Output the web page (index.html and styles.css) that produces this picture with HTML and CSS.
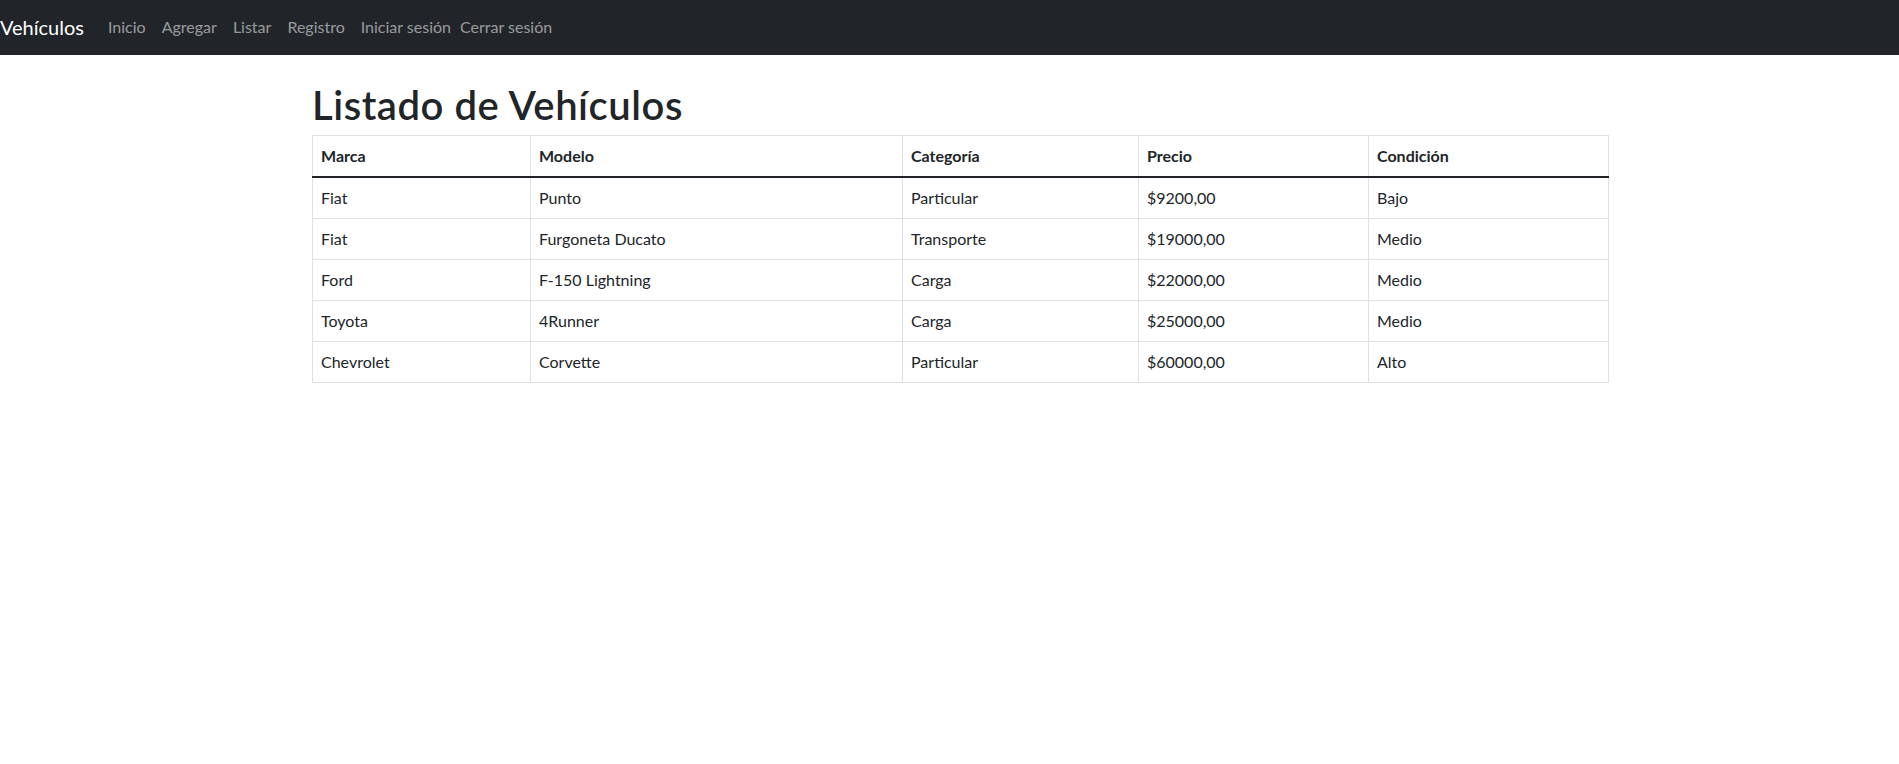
FILE: index.html
```html
<!DOCTYPE html>
<html lang="es">
<head>
<meta charset="utf-8">
<title>Listado de Vehículos</title>
<link rel="stylesheet" href="styles.css">
</head>
<body>
<nav class="navbar">
  <a class="brand" href="#">Vehículos</a>
  <ul class="nav">
    <li><a class="nav-link" href="#">Inicio</a></li>
    <li><a class="nav-link" href="#">Agregar</a></li>
    <li><a class="nav-link" href="#">Listar</a></li>
    <li><a class="nav-link" href="#">Registro</a></li>
    <li><a class="nav-link" href="#">Iniciar sesión</a></li>
    <li><a class="nav-link nav-link-tight" href="#">Cerrar sesión</a></li>
  </ul>
</nav>
<main class="content">
  <h1 class="title">Listado de Vehículos</h1>
  <table class="table">
    <colgroup>
      <col class="c1"><col class="c2"><col class="c3"><col class="c4"><col class="c5">
    </colgroup>
    <thead>
      <tr><th>Marca</th><th>Modelo</th><th>Categoría</th><th>Precio</th><th>Condición</th></tr>
    </thead>
    <tbody>
      <tr><td>Fiat</td><td>Punto</td><td>Particular</td><td>$9200,00</td><td>Bajo</td></tr>
      <tr><td>Fiat</td><td>Furgoneta Ducato</td><td>Transporte</td><td>$19000,00</td><td>Medio</td></tr>
      <tr><td>Ford</td><td>F-150 Lightning</td><td>Carga</td><td>$22000,00</td><td>Medio</td></tr>
      <tr><td>Toyota</td><td>4Runner</td><td>Carga</td><td>$25000,00</td><td>Medio</td></tr>
      <tr><td>Chevrolet</td><td>Corvette</td><td>Particular</td><td>$60000,00</td><td>Alto</td></tr>
    </tbody>
  </table>
</main>
</body>
</html>
```
FILE: styles.css
```css
* { box-sizing: border-box; }
body {
  margin: 0;
  font-family: Lato, "Liberation Sans", sans-serif;
  font-size: 16px;
  line-height: 1.5;
  color: #212529;
  background: #fff;
}
.navbar {
  display: flex;
  align-items: center;
  height: 55px;
  padding-bottom: 2px;
  background: #212529;
}
.brand {
  font-size: 20px;
  line-height: 30px;
  color: #fff;
  text-decoration: none;
  margin-right: 16px;
}
.nav {
  display: flex;
  list-style: none;
  margin: 0;
  padding: 0;
}
.nav-link {
  display: block;
  padding: 8px;
  color: rgba(255, 255, 255, 0.55);
  text-decoration: none;
}
.nav-link-tight { padding-left: 1px; }
.content {
  margin-top: 24px;
  padding-left: 312px;
  width: 1608px;
}
.title {
  margin: 0 0 6px;
  padding-top: 2px;
  font-size: 40px;
  font-weight: 600;
  line-height: 48px;
  letter-spacing: 0.55px;
}
.table {
  width: 1296px;
  table-layout: fixed;
  border-collapse: collapse;
  border: 1px solid #dee2e6;
}
.c1 { width: 218px; }
.c2 { width: 372px; }
.c3 { width: 236px; }
.c4 { width: 230px; }
.c5 { width: 240px; }
.table th, .table td {
  padding: 8px;
  border: 1px solid #dee2e6;
  text-align: left;
  vertical-align: top;
}
.table th { font-weight: 700; }
.table tbody tr:first-child td { border-top: 2px solid #212529; }
```
